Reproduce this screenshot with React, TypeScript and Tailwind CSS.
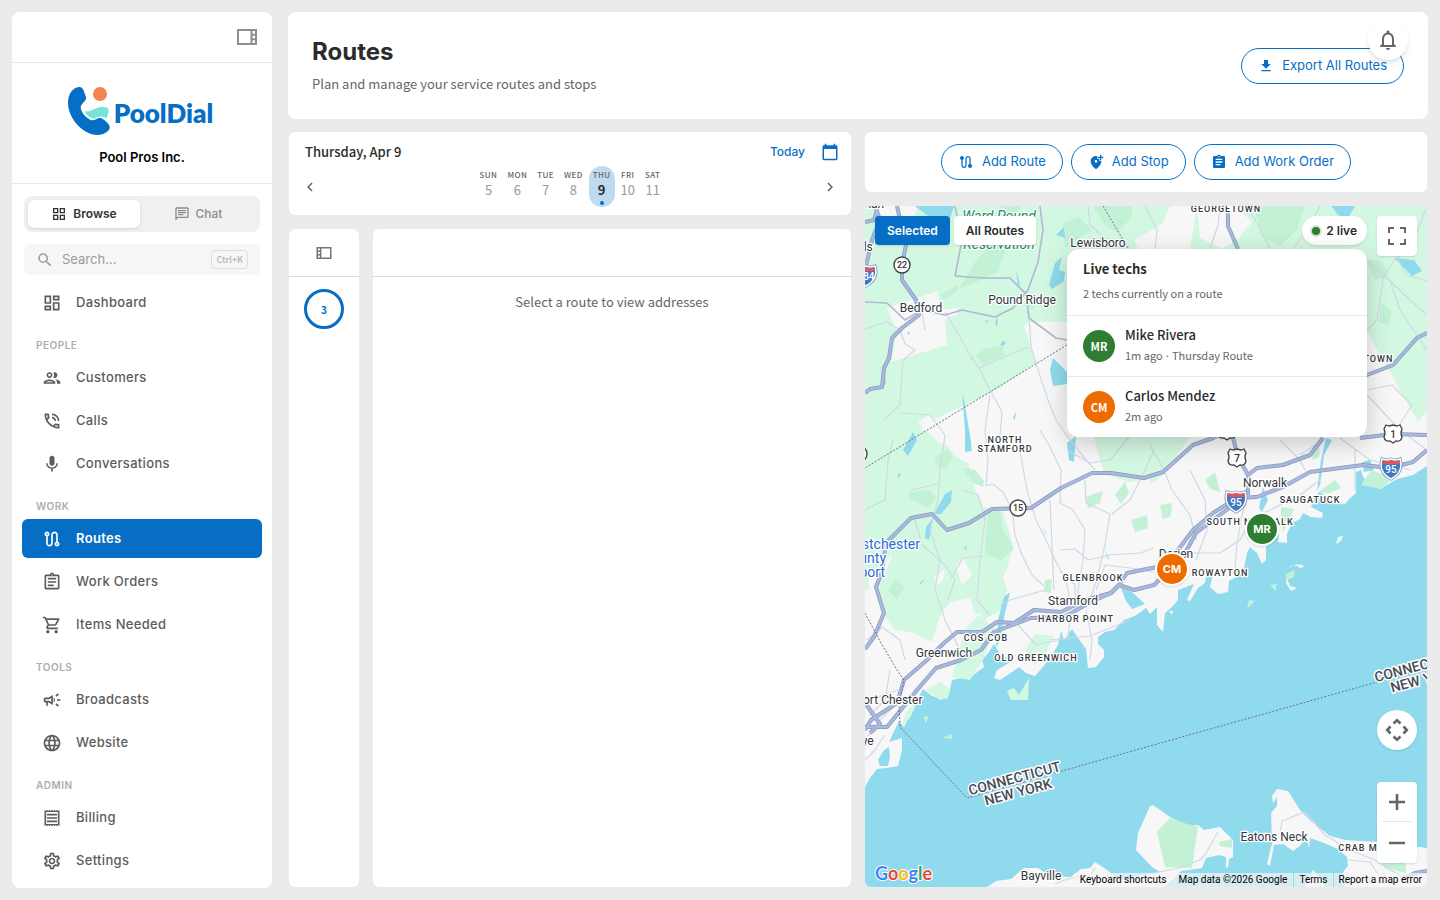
import React, { useState } from 'react';
import type { IconType } from 'react-icons';
import {
  MdAddLocationAlt,
  MdAssignment,
  MdCalendarToday,
  MdChevronLeft,
  MdChevronRight,
  MdFileDownload,
  MdLanguage,
  MdMic,
  MdNotificationsNone,
  MdOutlineAssignment,
  MdOutlineCampaign,
  MdOutlineChat,
  MdOutlineDashboard,
  MdOutlineGridView,
  MdOutlineGroup,
  MdOutlinePhoneInTalk,
  MdOutlineReceipt,
  MdOutlineRoute,
  MdOutlineSettings,
  MdOutlineShoppingCart,
  MdOutlineViewSidebar,
  MdRoute,
  MdSearch,
} from 'react-icons/md';

type NavItem = { label: string; icon: IconType };

const navGroups: { title?: string; items: NavItem[] }[] = [
  { items: [{ label: 'Dashboard', icon: MdOutlineDashboard }] },
  {
    title: 'PEOPLE',
    items: [
      { label: 'Customers', icon: MdOutlineGroup },
      { label: 'Calls', icon: MdOutlinePhoneInTalk },
      { label: 'Conversations', icon: MdMic },
    ],
  },
  {
    title: 'WORK',
    items: [
      { label: 'Routes', icon: MdOutlineRoute },
      { label: 'Work Orders', icon: MdOutlineAssignment },
      { label: 'Items Needed', icon: MdOutlineShoppingCart },
    ],
  },
  {
    title: 'TOOLS',
    items: [
      { label: 'Broadcasts', icon: MdOutlineCampaign },
      { label: 'Website', icon: MdLanguage },
    ],
  },
  {
    title: 'ADMIN',
    items: [
      { label: 'Billing', icon: MdOutlineReceipt },
      { label: 'Settings', icon: MdOutlineSettings },
    ],
  },
];

const week = [
  { day: 'SUN', date: 5 },
  { day: 'MON', date: 6 },
  { day: 'TUE', date: 7 },
  { day: 'WED', date: 8 },
  { day: 'THU', date: 9 },
  { day: 'FRI', date: 10 },
  { day: 'SAT', date: 11 },
];

const techs = [
  { initials: 'MR', name: 'Mike Rivera', seen: '1m ago', route: 'Thursday Route', color: 'bg-[#2e7d32]', pin: 'left-[380px] top-[306px]' },
  { initials: 'CM', name: 'Carlos Mendez', seen: '2m ago', route: '', color: 'bg-[#ed6c02]', pin: 'left-[290px] top-[346px]' },
];

const Logo = () => (
  <svg viewBox="165 222 450 150" className="w-[150px] h-[50px] overflow-visible" role="img" aria-label="PoolDial">
    <path
      d="M201 225C212 223 216 236 222 256C225 267 207 274 206 285C206 300 222 318 236 324C247 329 257 315 268 319C276 322 289 333 293 343C297 355 278 369 256 369C212 368 168 318 168 272C168 246 182 227 201 225Z"
      fill="#066fc5"
    />
    <circle cx="264" cy="246" r="21" fill="#f58453" />
    <path d="M218 298C244 300 247 283 272 285C280 285 289 287 290 293C291 302 285 311 285 319C268 310 258 314 248 320C236 321 224 311 218 298Z" fill="#76e4d6" />
    <text x="305" y="332" fontSize="78" fontWeight="800" fill="#066fc5" className="font-['Lato',sans-serif]">
      PoolDial
    </text>
  </svg>
);

const Sidebar = () => {
  const [active, setActive] = useState('Routes');

  return (
    <aside className="w-[260px] shrink-0 bg-white rounded-lg overflow-hidden flex flex-col">
      <div className="h-[51px] shrink-0 border-b border-[#e8e8e8] flex items-center justify-end px-[13px]">
        <button aria-label="Collapse sidebar" className="text-[#8f8f8f]">
          <MdOutlineViewSidebar className="w-6 h-6" />
        </button>
      </div>

      <div className="h-[121px] shrink-0 border-b border-[#e8e8e8] flex flex-col items-center pt-[23px]">
        <Logo />
        <p className="mt-3 text-[13px] leading-[18px] font-semibold text-black">Pool Pros Inc.</p>
      </div>

      <div className="px-3 pt-3 flex flex-col gap-3">
        <div className="flex h-9 p-1 bg-[#f0f0f0] rounded-lg text-xs">
          <button className="w-28 flex items-center justify-center gap-1.5 bg-white rounded-md shadow-sm font-semibold text-[#333]">
            <MdOutlineGridView className="w-4 h-4" />
            Browse
          </button>
          <button className="flex-1 flex items-center justify-center gap-1.5 font-medium text-[#8c8c8c]">
            <MdOutlineChat className="w-4 h-4" />
            Chat
          </button>
        </div>
        <label className="flex items-center h-[31px] px-3 bg-[#f6f6f6] rounded-md">
          <MdSearch className="w-[18px] h-[18px] mr-2 text-[#9a9a9a]" />
          <input
            type="search"
            aria-label="Search"
            placeholder="Search..."
            className="flex-1 min-w-0 bg-transparent outline-none text-[13px] placeholder:text-[#9c9c9c]"
          />
          <kbd className="h-[19px] px-1 border border-[#ddd] rounded text-[9px] leading-[17px] font-medium text-[#b5b5b5] font-['Noto_Sans_CJK_SC',sans-serif]">Ctrl+K</kbd>
        </label>
      </div>

      <nav className="px-[10px] pt-2">
        {navGroups.map((group, i) => (
          <div key={i}>
            {group.title && (
              <h2 className="mt-4 mb-[5px] pl-3.5 h-[15px] text-[10px] leading-[15px] font-semibold tracking-wider text-[#adadad]">{group.title}</h2>
            )}
            <ul className="flex flex-col gap-1">
              {group.items.map((item) => (
                <li key={item.label}>
                  <button
                    onClick={() => setActive(item.label)}
                    className={`w-full h-[39px] pl-5 flex items-center gap-3.5 rounded-md text-[13px] tracking-wide ${
                      active === item.label ? 'bg-[#066fc5] font-semibold text-white' : 'font-medium text-[#5c5c5c]'
                    }`}
                  >
                    <item.icon className="w-5 h-5" />
                    {item.label}
                  </button>
                </li>
              ))}
            </ul>
          </div>
        ))}
      </nav>
    </aside>
  );
};

const PillButton = ({ icon: Icon, children }: { icon: IconType; children: React.ReactNode }) => (
  <button className="h-9 px-4 flex items-center gap-2 border border-[#066fc5] rounded-full text-[13px] text-[#066fc5] whitespace-nowrap">
    <Icon className="w-4 h-4" />
    {children}
  </button>
);

const DateStrip = () => (
  <section className="bg-white rounded-md pb-2 text-[#2b2b2b] font-['Noto_Sans_CJK_SC',sans-serif]">
    <div className="h-[34px] pt-1.5 pl-4 pr-3 flex items-center">
      <h2 className="flex-1 text-[13px] font-medium">Thursday, Apr 9</h2>
      <button className="mr-4 text-xs font-medium text-[#066fc5] font-['Inter',sans-serif]">Today</button>
      <button aria-label="Pick a date" className="text-[#066fc5]">
        <MdCalendarToday className="w-[18px] h-[18px]" />
      </button>
    </div>
    <div className="flex items-center justify-between px-3">
      <button aria-label="Previous week" className="text-[#666]">
        <MdChevronLeft className="w-[18px] h-[18px]" />
      </button>
      <div className="flex gap-0.5">
        {week.map(({ day, date }) => (
          <button key={day} className={`h-[41px] px-1 pt-px flex flex-col items-center rounded-full ${date === 9 ? 'bg-[#bfdbf0]' : ''}`}>
            <span className="text-[8px] leading-[15px] font-medium tracking-wider text-[#666]">{day}</span>
            <span className={`text-[13px] leading-4 ${date === 9 ? 'font-bold' : 'text-[#9a9a9a]'}`}>{date}</span>
            {date === 9 && <span className="w-1 h-1 mt-[3px] rounded-full bg-[#066fc5]" />}
          </button>
        ))}
      </div>
      <button aria-label="Next week" className="text-[#666]">
        <MdChevronRight className="w-[18px] h-[18px]" />
      </button>
    </div>
  </section>
);

// Map geometry, in map canvas units
const coast =
  'M865 206H1427V466L1413 475L1397 479L1380 489L1370 485L1363 477L1361 470L1356 472V493L1349 499L1345 504L1336 503L1325 495L1319 492L1314 499L1311 507L1323 513L1322 518L1311 517L1303 513L1300 519L1292 523L1287 534L1287 543L1278 542L1279 534L1272 541L1266 547V560L1262 564L1257 553L1250 547L1247 553L1244 568L1240 575L1229 581L1228 592L1218 594L1210 587L1213 575L1206 576L1205 583L1198 588L1190 601L1187 600L1194 584L1178 590L1178 600L1170 609L1165 613L1163 632L1157 625V607L1150 614L1146 608L1135 616L1124 620L1114 630L1105 632L1098 637L1098 644L1104 650V657L1096 667L1088 668L1086 649L1078 638L1072 629L1064 640L1061 631L1058 645L1050 658L1042 668L1035 676L1026 673L1019 667L1012 672L1000 680L994 678L997 670L1012 661L1000 654L994 644L989 652L982 660L984 667L972 676L952 680L949 694L942 699L932 696L923 689L914 706L904 727L899 721L889 742L902 738L902 750L898 766L886 768L877 769L870 778L865 787Z';

const southShore = [
  'M987 887L996 881L1011 879L1024 868L1038 868L1050 876L1071 877L1081 869L1090 868L1095 862L1107 870L1120 880L1160 872L1152 867L1136 850L1138 833L1150 806L1153 805L1170 817L1187 825L1198 825L1204 830L1220 827L1233 840V857L1229 859L1228 868L1226 867L1226 857L1219 855L1206 858L1202 868L1181 871L1165 887Z',
  'M1277 789L1288 791L1300 810L1311 821L1330 836L1345 840L1377 842L1427 848V887H1345L1343 872L1348 866L1347 857L1338 849L1324 843L1310 838L1309 848L1306 836L1300 846L1293 851L1283 844L1274 845L1270 866L1267 864L1272 843L1271 813L1277 806V797L1273 803L1272 796Z',
  'M1304 887L1313 870L1322 880L1325 887Z',
  'M1336 544L1341 541L1343 536L1338 537ZM1289 567L1292 563L1290 566L1298 566L1303 568L1300 567L1299 564M1287 578L1290 586L1297 588L1291 591L1286 583ZM1298 568L1304 567L1301 564ZM1169 611L1173 611L1172 615Z',
];

const forests = [
  'M865 206H1170L1162 224L1134 240L1138 249H1190L1197 206H1427V410L1418 422L1367 332H1067V322H1028L1024 326L1031 348L1037 362L1000 388L942 416L932 420L920 430L932 430L959 459L968 463L975 490L984 507L1003 512L1013 545L1007 570L1001 580L993 610L975 614L970 598L950 602L940 616L932 642L914 633L894 629L880 610L876 590L865 590Z',
  'M1092 430H1154V478L1130 482L1104 474Z',
  'M1150 437L1190 437L1160 478L1150 484Z',
  'M985 560L1000 568L1007 590L1001 610L984 620L972 600Z',
  'M965 630L978 615L995 628L983 660L970 680L952 677Z',
  'M1007 691L1014 688L1019 695L1029 678L1028 700L1011 700Z',
  'M1025 650L1035 634L1054 636L1046 652L1035 665Z',
  'M926 690L940 682L950 689L948 698L940 700Z',
  'M902 726L906 712L918 700L910 718Z',
];

const woods = [
  'M960 288L975 262L990 245L1006 250L998 272L981 280Z',
  'M976 355L985 349L1003 345L1004 355L983 365Z',
  'M940 295L958 284L957 291L944 300Z',
  'M1023 305L1036 300L1034 310Z',
  'M1063 223L1079 217L1092 230L1079 238L1065 248Z',
  'M1092 206H1133L1131 218L1117 233L1104 224Z',
  'M1252 206H1305L1297 230L1280 246L1262 237L1258 220Z',
  'M1364 258L1383 262L1389 276L1375 280Z',
  'M1381 302L1392 312L1389 325L1379 323Z',
  'M1000 206H1022L1014 216Z',
  'M962 468L975 470L984 481L983 487L973 483Z',
  'M935 457L948 449L953 458L945 470L936 464Z',
  'M908 492L931 490L936 499L928 508L910 498Z',
  'M988 512L1000 511L1004 532L1014 549L1001 560L985 554Z',
  'M888 590L897 579L904 587L897 600Z',
  'M1086 497L1103 491L1100 503L1088 508Z',
  'M1115 495L1125 482L1129 493L1121 504Z',
  'M1131 520L1147 515L1148 528L1135 532Z',
  'M1205 480L1215 472L1220 492L1210 489Z',
  'M1160 505L1172 503L1171 516L1163 519Z',
  'M1312 455L1320 446L1319 457L1313 460Z',
  'M1317 493L1335 480L1341 488L1329 493Z',
  'M1361 485L1371 470L1392 478L1382 489Z',
  'M1281 507L1294 509L1286 527L1283 532L1281 518Z',
  'M1270 585L1276 584L1276 591ZM1249 600L1255 601L1247 609ZM1286 574L1295 570L1294 577L1286 580Z',
  'M1045 580L1052 579L1051 593L1044 592Z',
  'M1157 832L1170 818L1187 824L1198 826L1192 868L1165 867Z',
  'M1219 842L1232 839V848L1220 846Z',
  'M1377 855L1405 858L1406 873L1385 868Z',
  'M923 717L929 716L926 723ZM942 738L952 734V739Z',
];

const ponds = [
  'M915 206H954L948 225L936 222Z',
  'M1049 285L1055 263L1062 257L1059 270L1065 272L1064 281L1052 289Z',
  'M1050 370L1053 358L1067 372V384L1053 386Z',
  'M962 392L965 405L971 442H966Z',
  'M965 430L969 430L972 451L965 452Z',
  'M1056 235L1064 227L1065 238Z',
  'M995 322L998 317L997 328Z',
  'M903 450L913 432L917 440L908 456Z',
  'M934 514L945 494L952 490L951 502L941 514Z',
  'M926 527L933 518L929 540L925 538Z',
  'M1067 443L1076 436L1074 462L1069 460Z',
  'M1004 597L1010 592L1005 613L1000 640L996 648L998 620Z',
  'M1121 588L1132 592L1145 604L1132 609L1126 601Z',
  'M1259 508L1263 487L1268 500L1262 512Z',
  'M1317 491L1321 460L1326 438L1332 440L1324 455L1320 485Z',
  'M1362 462L1370 460L1374 470L1364 472Z',
  'M1331 206H1355L1348 218L1338 215Z',
  'M1394 258L1414 260L1422 271L1412 276Z',
  'M884 750L889 747L890 757L888 766L880 766L878 760Z',
  'M1001 344L1006 342L1003 346ZM971 358L974 356L972 360ZM1013 418L1016 411L1015 420ZM897 475L901 473L899 478ZM919 583L925 579L921 584ZM964 549L967 545L966 550ZM880 388L885 374L886 384Z',
  'M985 321L988 320L987 324ZM1000 345L1003 340L1006 344ZM1105 549L1109 560L1107 558ZM1043 527L1047 535L1045 533ZM907 333L910 331L909 335ZM1016 270L1020 284L1018 288Z',
];

const minorRoads = [
  'M865 302L887 303L905 320L922 310L945 315L962 310L995 317L1013 308L1028 290L1038 262L1043 230L1040 206',
  'M955 276L962 240L955 206M955 276L985 278L1010 278L1026 294L1029 318L1056 338L1067 340',
  'M945 312L960 337L970 355L979 368L990 390L1002 412L1000 435L1006 450',
  'M979 368L1004 357L1028 347M1029 318L1031 347L1037 367L1048 400L1056 420L1070 440L1087 461L1095 470',
  'M865 329L887 322L900 330L905 344L915 350L903 360L900 405L884 420M922 310L925 330',
  'M900 413L930 415L945 435L940 470L938 500L930 530L940 560L935 590L945 620L960 650',
  'M865 510L885 500L888 460L893 440M911 490L938 484M915 520L922 545L945 565L955 580L948 600',
  'M951 578L963 558L984 556M963 490L978 495L985 520L980 560L977 600L990 615',
  'M986 486L993 484L1003 492L1012 510L1015 535L1022 555L1032 575L1044 586',
  'M990 395L985 430L988 460L986 486M1018 440L1027 490L1036 520L1046 540L1055 560L1066 580L1070 600',
  'M1040 430L1050 447L1061 470L1060 503L1073 510L1085 530L1083 560L1078 590L1080 610',
  'M1085 480L1086 503L1110 514L1105 545L1098 575L1090 600M1154 450L1145 470L1130 500L1112 514',
  'M1061 550L1075 549L1088 560L1110 555L1140 553L1154 548M1067 450L1090 463L1110 460L1135 430',
  'M1096 590L1105 565L1130 568L1154 572M1060 571L1075 585L1076 612',
  'M1050 640L1090 636L1130 620M1018 625L1036 645L1060 640M1000 605L1010 600L1045 590',
  'M1150 445L1164 470L1172 490L1190 515L1196 540M1190 470L1205 500L1207 530L1196 560',
  'M1160 553L1180 553L1220 553L1240 540L1250 520L1270 510L1300 495L1320 480',
  'M1248 490L1241 520L1237 545L1235 570M1280 440L1300 460L1305 470M1355 450L1355 490',
  'M1323 440L1300 455M1340 438L1370 460L1410 470M1367 395L1400 430L1427 450M1367 390L1392 385L1412 405L1396 430L1380 434',
  'M1088 206L1090 225L1101 235L1115 249M1145 206L1157 230L1155 249M1220 206L1218 225L1210 249M1247 206L1258 225L1270 249',
  'M1293 249L1310 225L1320 206M1367 260L1384 275L1396 258L1410 250L1427 206M1427 281L1407 275L1395 255',
  'M1384 275L1380 300L1377 320L1367 330M1384 275L1410 300L1427 315M1390 280L1400 310L1427 350',
  'M867 640L882 627L900 640L905 660M890 670L885 700L870 715M865 740L880 720L900 700M868 700L898 690',
  'M865 760L875 750L885 735M1154 873L1180 868L1200 860L1205 855L1218 832M1280 833L1282 821L1297 815L1305 812L1325 835L1350 850L1375 860L1390 870L1405 877',
  'M1085 884L1095 868M1055 884L1065 880L1085 875M1348 860L1370 862L1380 877M1050 500L1054 590',
  'M1086 610L1092 640L1090 660M1070 615L1068 640',
];

const highways = [
  'M865 649L874 637L884 613L876 587L882 572L886 543L911 518L932 514L947 530L969 523L992 509L1031 508L1061 488L1092 473L1111 473L1144 478L1163 472L1193 445L1213 438L1270 410L1330 385L1367 375L1393 365L1417 338L1427 333',
  'M865 393L870 389L882 387L884 368L889 358L892 338L902 328L919 315L916 300L902 280L902 265L906 245L897 206',
  'M865 222L874 220L878 206M865 270L872 240L880 220L875 206',
  'M1360 438L1393 434L1427 435M1323 438L1310 455L1283 465L1257 468L1248 475',
  'M1228 206V226L1238 249M1231 430L1238 457L1248 475V495',
  'M1427 450L1413 462L1390 468L1363 465L1310 472L1283 487L1257 497L1237 498L1213 513L1193 530L1178 550L1157 567L1127 573L1119 585L1111 593L1085 600L1061 612L1034 610L1014 623L997 622L982 632L957 632L944 643L927 660L904 680L897 703L871 720L865 730',
  'M1237 502L1213 520L1196 533L1184 555L1154 585L1134 590L1119 585L1111 593L1091 602L1064 617L1031 618L994 632L981 650L961 660L936 668L917 690L887 727L865 727M865 703L880 724L870 733',
  'M1427 871L1415 873L1405 878',
];

const borders = ['M1067 345L865 468', 'M1103 206L1128 248', 'M865 613L881 643L897 670L904 680L899 705L900 727L967 798L1150 746L1427 668'];

const towns: [string, number, number][] = [
  ['Lewisboro', 1098, 247],
  ['Bedford', 921, 312],
  ['Pound Ridge', 1022, 304],
  ['Norwalk', 1265, 487],
  ['Darien', 1176, 558],
  ['Stamford', 1073, 605],
  ['Greenwich', 944, 657],
  ['Port Chester', 889, 704],
  ['Rye', 864, 745],
  ['Bayville', 1041, 880],
  ['Eatons Neck', 1274, 841],
  ['Katonah', 862, 208],
  ['Hills', 861, 251],
];

const districts: [string, number, number][] = [
  ['GEORGETOWN', 1226, 212],
  ['NORTH', 1005, 443],
  ['STAMFORD', 1005, 452],
  ['SAUGATUCK', 1310, 503],
  ['SOUTH NORWALK', 1250, 525],
  ['ROWAYTON', 1220, 576],
  ['GLENBROOK', 1093, 581],
  ['HARBOR POINT', 1076, 622],
  ['COS COB', 986, 641],
  ['OLD GREENWICH', 1036, 661],
  ['CRAB MEADOW', 1376, 851],
  ['GREENFIELD TOWN', 1346, 362],
];

const Interstate = ({ x, y, label }: { x: number; y: number; label: string }) => (
  <g transform={`translate(${x} ${y})`}>
    <path d="M-9 -9Q-4 -7 0 -9Q4 -7 9 -9Q13 4 0 11Q-13 4 -9 -9Z" fill="#3f78c5" stroke="#7f8fb8" strokeWidth="3" />
    <path d="M-9 -9Q-4 -7 0 -9Q4 -7 9 -9Q13 4 0 11Q-13 4 -9 -9Z" fill="#3f78c5" stroke="#fff" strokeWidth="1.5" />
    <path d="M-8 -8Q-4 -6 0 -8Q4 -6 8 -8L9 -4H-9Z" fill="#e25555" />
    <text y="5" fontSize="10" fontWeight="500" textAnchor="middle" fill="#fff">{label}</text>
  </g>
);

const Shield = ({ x, y, label }: { x: number; y: number; label: string }) => (
  <g transform={`translate(${x} ${y})`}>
    <path d="M-7 -9L-4 -8L0 -9L4 -8L7 -9L9 -5Q7 -1 9 3Q8 8 3 7L0 9L-3 7Q-8 8 -9 3Q-7 -1 -9 -5Z" fill="#fff" stroke="#444" strokeWidth="1.3" />
    <text y="4" fontSize="10" fontWeight="500" textAnchor="middle" fill="#333">{label}</text>
  </g>
);

const RouteCircle = ({ x, y, label }: { x: number; y: number; label: string }) => (
  <g transform={`translate(${x} ${y})`}>
    <circle r="8" fill="#fff" stroke="#444" strokeWidth="1.4" />
    <text y="3" fontSize="9" fontWeight="500" textAnchor="middle" fill="#333">{label}</text>
  </g>
);

const StateLine = ({ x, y }: { x: number; y: number }) => (
  <g transform={`translate(${x} ${y}) rotate(-15)`} fontSize="14" fontWeight="500" textAnchor="middle" fill="#484c55" stroke="#fff" strokeWidth="3" paintOrder="stroke" strokeLinejoin="round">
    <text y="-1">CONNECTICUT</text>
    <text y="13">NEW YORK</text>
  </g>
);

const MapCanvas = () => (
  <svg viewBox="865 206 562 681" preserveAspectRatio="xMinYMin slice" className="absolute inset-0 w-full h-full font-['Roboto',sans-serif]" role="img" aria-label="Map of the Connecticut shore">
    <rect x="865" y="206" width="2000" height="2000" fill="#90daee" />
    <path d={coast} fill="#f7f7f7" />
    {southShore.map((d) => <path key={d} d={d} fill="#f7f7f7" />)}
    <g fill="#d3f8e2">{forests.map((d) => <path key={d} d={d} />)}</g>
    <g fill="#f7f7f7">
      <path d="M887 308L918 298L937 291L941 310L958 308L958 314L945 319L947 345L891 362L897 332L893 322Z" />
      <path d="M877 206H918L911 225L880 232Z" />
      <path d="M935 576L945 570L943 580L936 586ZM956 566L963 558L972 575L962 585ZM918 422L930 414L950 440L940 444Z" />
      <path d="M1197 206L1235 206L1252 222L1237 240L1222 249L1200 238Z" />
      <path d="M868 580L892 555L892 558L870 600Z" />
    </g>
    <g fill="#c3f1d5">{woods.map((d) => <path key={d} d={d} />)}</g>
    <g fill="#90daee">{ponds.map((d) => <path key={d} d={d} />)}</g>
    <g fill="none" stroke="#d0d8e5" strokeWidth="1.2" strokeLinejoin="round">
      {minorRoads.map((d) => <path key={d} d={d} />)}
    </g>
    <g fill="none" stroke="#b3b9d3" strokeWidth="1.6" strokeLinejoin="round">
      {minorRoads.slice(0, 2).map((d) => <path key={d} d={d} />)}
    </g>
    <g fill="none" stroke="#8799c2" strokeWidth="4" strokeLinejoin="round">
      {highways.map((d) => <path key={d} d={d} />)}
    </g>
    <g fill="none" stroke="#aab9db" strokeWidth="2.6" strokeLinejoin="round">
      {highways.map((d) => <path key={d} d={d} />)}
    </g>
    <g fill="none" stroke="#6d7480" strokeWidth="1" strokeDasharray="2 1.6">
      {borders.map((d) => <path key={d} d={d} />)}
    </g>

    <g fontSize="12" textAnchor="middle" fill="#33373d" stroke="#fff" strokeWidth="2.5" paintOrder="stroke" strokeLinejoin="round">
      {towns.map(([name, x, y]) => <text key={name} x={x} y={y}>{name}</text>)}
    </g>
    <g fontSize="9" fontWeight="500" letterSpacing="1" textAnchor="middle" fill="#33373d" stroke="#fff" strokeWidth="2.5" paintOrder="stroke" strokeLinejoin="round">
      {districts.map(([name, x, y]) => <text key={name} x={x} y={y}>{name}</text>)}
    </g>
    <g fontSize="14" fontStyle="italic" textAnchor="middle" fill="#1e8868" stroke="#fff" strokeWidth="2" paintOrder="stroke">
      <text x="999" y="221">Ward Pound</text>
      <text x="999" y="249">Reservation</text>
    </g>
    <g fontSize="14" fill="#2a6bd4" stroke="#fff" strokeWidth="2.5" paintOrder="stroke">
      <text x="920" y="549" textAnchor="end">Westchester</text>
      <text x="886" y="563" textAnchor="end">County</text>
      <text x="885" y="577" textAnchor="end">Airport</text>
    </g>

    <RouteCircle x={902} y={265} label="22" />
    <RouteCircle x={1018} y={508} label="15" />
    <RouteCircle x={859} y={454} label="22" />
    <Interstate x={866} y={275} label="684" />
    <Interstate x={1236} y={501} label="95" />
    <Interstate x={1391} y={468} label="95" />
    <Shield x={1237} y={458} label="7" />
    <Shield x={1227} y={431} label="7" />
    <Shield x={1393} y={434} label="1" />
    <StateLine x={1016} y={784} />
    <StateLine x={1422} y={671} />
  </svg>
);

const RouteMap = () => (
  <section className="relative flex-1 min-h-0 rounded-md overflow-hidden" aria-label="Route map">
    <MapCanvas />

    {techs.map((tech) => (
      <button key={tech.initials} className={`absolute w-[34px] h-[34px] rounded-full border-2 border-white text-white text-[11px] font-bold shadow ${tech.color} ${tech.pin}`}>
        {tech.initials}
      </button>
    ))}

    <div className="absolute left-[10px] top-[10px] flex gap-1 text-xs font-semibold">
      <button className="h-[29px] px-3 rounded bg-[#066fc5] text-white shadow">Selected</button>
      <button className="h-[29px] px-3 rounded bg-white text-[#2b2b2b] shadow">All Routes</button>
    </div>

    <div className="absolute right-[60px] top-[10px] flex flex-col items-end gap-1">
      <button className="h-[29px] pl-2 pr-2.5 flex items-center gap-1 rounded-full bg-white shadow text-xs font-semibold text-[#2b2b2b]">
        <span className="w-3 h-3 rounded-full bg-[#d3e5d4] flex items-center justify-center">
          <span className="w-2 h-2 rounded-full bg-[#2e7d32]" />
        </span>
        2 live
      </button>
      <div className="w-[300px] bg-white rounded-xl shadow-[0_6px_24px_rgba(0,0,0,0.2)] text-[#2b2b2b] font-['Noto_Sans_CJK_SC',sans-serif]">
        <div className="h-[66px] px-4 pt-2.5">
          <h3 className="text-[13px] leading-5 font-bold">Live techs</h3>
          <p className="mt-[5px] text-[11px] leading-[18px] text-[#666]">2 techs currently on a route</p>
        </div>
        <ul>
          {techs.map((tech) => (
            <li key={tech.initials} className="h-[61px] px-4 flex items-center gap-2.5 border-t border-[#e8e8e8]">
              <span className={`w-8 h-8 rounded-full flex items-center justify-center text-white text-[11px] font-bold ${tech.color}`}>{tech.initials}</span>
              <div className="pb-0.5">
                <p className="text-[13px] leading-5 font-medium">{tech.name}</p>
                <p className="text-[11px] leading-5 text-[#666]">
                  {tech.seen}
                  {tech.route && (
                    <>
                      <span className="font-['Inter',sans-serif]"> · </span>
                      {tech.route}
                    </>
                  )}
                </p>
              </div>
            </li>
          ))}
        </ul>
      </div>
    </div>

    <button aria-label="Toggle fullscreen" className="absolute right-[10px] top-[10px] w-10 h-10 flex items-center justify-center bg-white rounded-sm shadow">
      <svg viewBox="0 0 18 18" className="w-[18px] h-[18px]" fill="none" stroke="#666" strokeWidth="2">
        <path d="M1 6V1H6M12 1H17V6M17 12V17H12M6 17H1V12" />
      </svg>
    </button>

    <button aria-label="Map camera controls" className="absolute right-[10px] bottom-[137px] w-10 h-10 flex items-center justify-center bg-white rounded-full shadow">
      <svg viewBox="0 0 24 24" className="w-6 h-6" fill="none" stroke="#666" strokeWidth="2.6">
        <path d="M8.5 5.5L12 2.2L15.5 5.5M18.5 8.5L21.800 12L18.5 15.5M15.5 18.5L12 21.8L8.5 18.5M5.5 15.5L2.2 12L5.5 8.5" />
      </svg>
    </button>

    <div className="absolute right-[10px] bottom-6 w-10 px-[5px] bg-white rounded-sm shadow divide-y divide-[#e6e6e6]">
      <button aria-label="Zoom in" className="w-full h-10 flex items-center justify-center">
        <svg viewBox="0 0 16 16" className="w-4 h-4" stroke="#666" strokeWidth="2.6">
          <path d="M0 8H16M8 0V16" />
        </svg>
      </button>
      <button aria-label="Zoom out" className="w-full h-[41px] flex items-center justify-center">
        <svg viewBox="0 0 16 16" className="w-4 h-4" stroke="#666" strokeWidth="2.6">
          <path d="M0 8H16" />
        </svg>
      </button>
    </div>

    <svg viewBox="0 0 66 26" className="absolute left-[6px] bottom-0 w-[66px] h-[26px]" role="img" aria-label="Google">
      <text x="4" y="19" fontSize="18" fontWeight="700" stroke="#fff" strokeWidth="2" paintOrder="stroke" className="font-['Lato',sans-serif]">
        <tspan fill="#4285f4">G</tspan>
        <tspan fill="#ea4335">o</tspan>
        <tspan fill="#fbbc04">o</tspan>
        <tspan fill="#4285f4">g</tspan>
        <tspan fill="#34a853">l</tspan>
        <tspan fill="#ea4335">e</tspan>
      </text>
    </svg>

    <div className="absolute right-0 bottom-0 h-3.5 flex text-[10px] leading-3.5 text-black font-['Roboto',sans-serif] whitespace-nowrap">
      <button className="px-1.5 bg-[#f5f5f5]/70">Keyboard shortcuts</button>
      <span className="px-1.5 bg-[#f5f5f5]/70">Map data ©2026 Google</span>
      <a href="#terms" className="px-[5px] bg-[#f5f5f5]/70 border-l border-[#90daee]">Terms</a>
      <a href="#report" className="px-[5px] bg-[#f5f5f5]/70 border-l border-[#90daee]">Report a map error</a>
    </div>
  </section>
);

export default function App() {
  return (
    <div className="relative h-screen p-3 flex gap-4 bg-[#ebebeb] text-[#2b2b2b] font-['Inter',sans-serif]">
      <Sidebar />

      <main className="flex-1 min-w-0 flex flex-col">
        <header className="h-[107px] shrink-0 px-6 bg-white rounded-lg flex items-center justify-between">
          <div className="pb-0.5">
            <h1 className="text-2xl leading-8 font-bold">Routes</h1>
            <p className="mt-1.5 text-[13px] leading-5 text-[#666] font-['Noto_Sans_CJK_SC',sans-serif]">Plan and manage your service routes and stops</p>
          </div>
          <PillButton icon={MdFileDownload}>Export All Routes</PillButton>
        </header>

        <div className="flex-1 min-h-0 mt-[13px] mx-px mb-px grid grid-cols-2 gap-3.5">
          <div className="min-w-0 min-h-0 flex flex-col gap-3.5">
            <DateStrip />
            <div className="flex-1 min-h-0 flex gap-3.5">
              <section className="w-[70px] bg-white rounded-md">
                <div className="h-12 border-b border-[#ddd] flex items-center justify-center">
                  <button aria-label="Expand route list" className="text-[#757575]">
                    <MdOutlineViewSidebar className="w-[18px] h-[18px] rotate-180" />
                  </button>
                </div>
                <button className="mx-auto mt-3 w-10 h-10 flex items-center justify-center rounded-full border-3 border-[#066fc5] text-[10px] font-bold text-[#066fc5] font-['Noto_Sans_CJK_SC',sans-serif]">
                  3
                </button>
              </section>
              <section className="flex-1 bg-white rounded-md">
                <div className="h-12 border-b border-[#ddd]" />
                <p className="mt-[15px] text-center text-[13px] leading-5 text-[#666] font-['Noto_Sans_CJK_SC',sans-serif]">Select a route to view addresses</p>
              </section>
            </div>
          </div>

          <div className="min-w-0 min-h-0 flex flex-col gap-3.5">
            <div className="p-3 bg-white rounded-md flex justify-center gap-2">
              <PillButton icon={MdRoute}>Add Route</PillButton>
              <PillButton icon={MdAddLocationAlt}>Add Stop</PillButton>
              <PillButton icon={MdAssignment}>Add Work Order</PillButton>
            </div>
            <RouteMap />
          </div>
        </div>
      </main>

      <button aria-label="Notifications" className="absolute right-8 top-5 w-10 h-10 flex items-center justify-center bg-white rounded-full shadow-md text-[#666]">
        <MdNotificationsNone className="w-6 h-6" />
      </button>
    </div>
  );
}
